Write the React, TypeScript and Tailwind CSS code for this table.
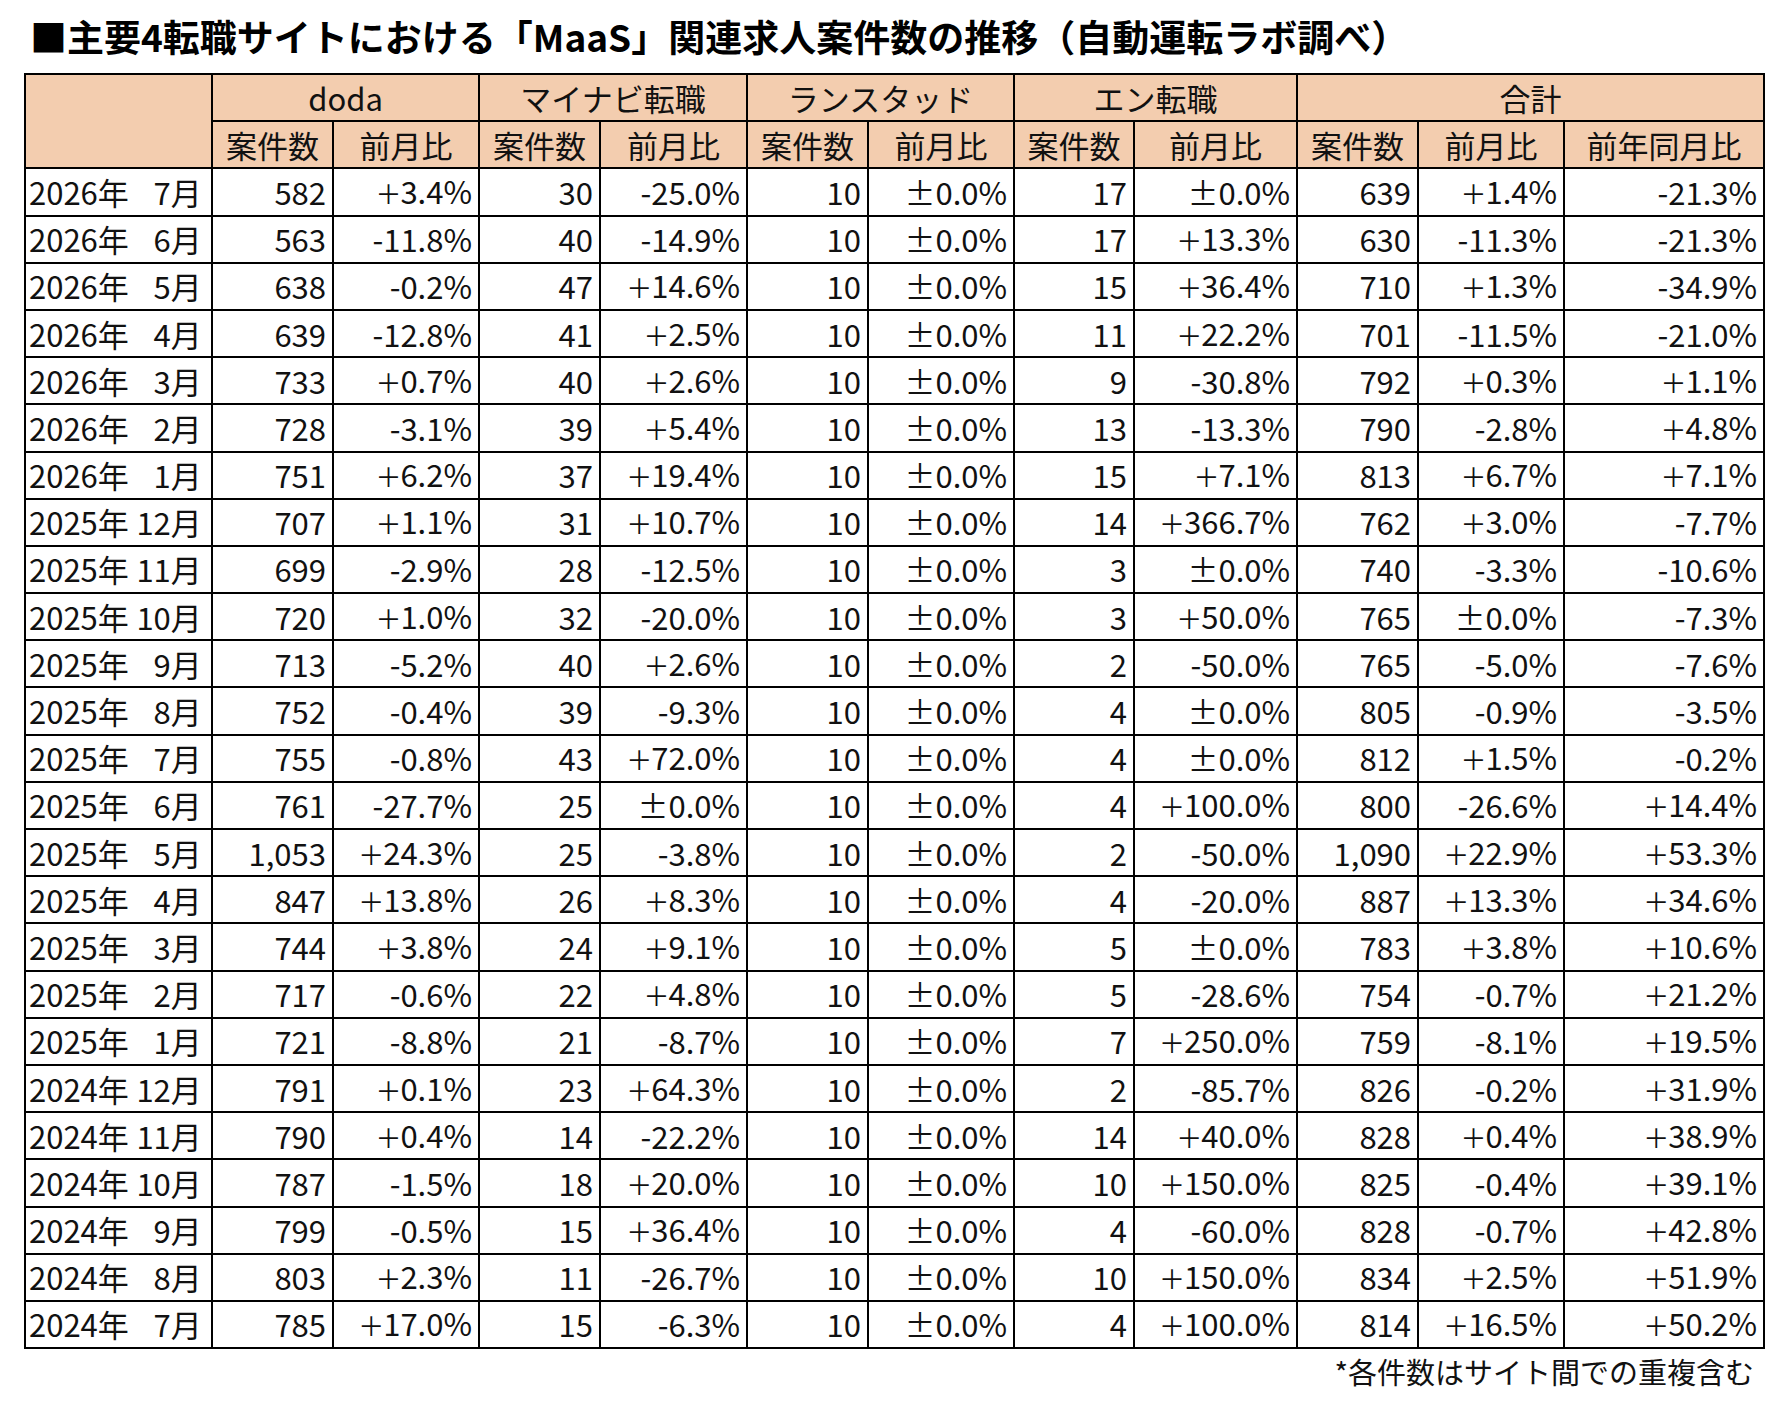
const COL_WIDTHS = [187, 121, 146, 121, 147, 121, 146, 120, 163, 121, 146, 200]

const SITES = ["doda", "マイナビ転職", "ランスタッド", "エン転職"]

type Row = [string, string, ...string[]]

const ROWS: Row[] = [
  ["2026", "7", "582", "+3.4%", "30", "-25.0%", "10", "±0.0%", "17", "±0.0%", "639", "+1.4%", "-21.3%"],
  ["2026", "6", "563", "-11.8%", "40", "-14.9%", "10", "±0.0%", "17", "+13.3%", "630", "-11.3%", "-21.3%"],
  ["2026", "5", "638", "-0.2%", "47", "+14.6%", "10", "±0.0%", "15", "+36.4%", "710", "+1.3%", "-34.9%"],
  ["2026", "4", "639", "-12.8%", "41", "+2.5%", "10", "±0.0%", "11", "+22.2%", "701", "-11.5%", "-21.0%"],
  ["2026", "3", "733", "+0.7%", "40", "+2.6%", "10", "±0.0%", "9", "-30.8%", "792", "+0.3%", "+1.1%"],
  ["2026", "2", "728", "-3.1%", "39", "+5.4%", "10", "±0.0%", "13", "-13.3%", "790", "-2.8%", "+4.8%"],
  ["2026", "1", "751", "+6.2%", "37", "+19.4%", "10", "±0.0%", "15", "+7.1%", "813", "+6.7%", "+7.1%"],
  ["2025", "12", "707", "+1.1%", "31", "+10.7%", "10", "±0.0%", "14", "+366.7%", "762", "+3.0%", "-7.7%"],
  ["2025", "11", "699", "-2.9%", "28", "-12.5%", "10", "±0.0%", "3", "±0.0%", "740", "-3.3%", "-10.6%"],
  ["2025", "10", "720", "+1.0%", "32", "-20.0%", "10", "±0.0%", "3", "+50.0%", "765", "±0.0%", "-7.3%"],
  ["2025", "9", "713", "-5.2%", "40", "+2.6%", "10", "±0.0%", "2", "-50.0%", "765", "-5.0%", "-7.6%"],
  ["2025", "8", "752", "-0.4%", "39", "-9.3%", "10", "±0.0%", "4", "±0.0%", "805", "-0.9%", "-3.5%"],
  ["2025", "7", "755", "-0.8%", "43", "+72.0%", "10", "±0.0%", "4", "±0.0%", "812", "+1.5%", "-0.2%"],
  ["2025", "6", "761", "-27.7%", "25", "±0.0%", "10", "±0.0%", "4", "+100.0%", "800", "-26.6%", "+14.4%"],
  ["2025", "5", "1,053", "+24.3%", "25", "-3.8%", "10", "±0.0%", "2", "-50.0%", "1,090", "+22.9%", "+53.3%"],
  ["2025", "4", "847", "+13.8%", "26", "+8.3%", "10", "±0.0%", "4", "-20.0%", "887", "+13.3%", "+34.6%"],
  ["2025", "3", "744", "+3.8%", "24", "+9.1%", "10", "±0.0%", "5", "±0.0%", "783", "+3.8%", "+10.6%"],
  ["2025", "2", "717", "-0.6%", "22", "+4.8%", "10", "±0.0%", "5", "-28.6%", "754", "-0.7%", "+21.2%"],
  ["2025", "1", "721", "-8.8%", "21", "-8.7%", "10", "±0.0%", "7", "+250.0%", "759", "-8.1%", "+19.5%"],
  ["2024", "12", "791", "+0.1%", "23", "+64.3%", "10", "±0.0%", "2", "-85.7%", "826", "-0.2%", "+31.9%"],
  ["2024", "11", "790", "+0.4%", "14", "-22.2%", "10", "±0.0%", "14", "+40.0%", "828", "+0.4%", "+38.9%"],
  ["2024", "10", "787", "-1.5%", "18", "+20.0%", "10", "±0.0%", "10", "+150.0%", "825", "-0.4%", "+39.1%"],
  ["2024", "9", "799", "-0.5%", "15", "+36.4%", "10", "±0.0%", "4", "-60.0%", "828", "-0.7%", "+42.8%"],
  ["2024", "8", "803", "+2.3%", "11", "-26.7%", "10", "±0.0%", "10", "+150.0%", "834", "+2.5%", "+51.9%"],
  ["2024", "7", "785", "+17.0%", "15", "-6.3%", "10", "±0.0%", "4", "+100.0%", "814", "+16.5%", "+50.2%"],
]

const cell = "border-2 border-black h-[47.2px] p-0 leading-[40px] whitespace-nowrap"
const head = `${cell} bg-[#f3cdaf] text-center font-normal`

// the sheet draws ± full width and a large + sign
function Value({ text }: { text: string }) {
  if (text.startsWith("±")) {
    return (
      <>
        <span className="inline-block w-[1em] text-left">±</span>
        {text.slice(1)}
      </>
    )
  }
  if (text.startsWith("+")) {
    return (
      <>
        <span className="inline-block w-[25px] text-center text-[26px]">＋</span>
        {text.slice(1)}
      </>
    )
  }
  return <>{text}</>
}

export default function App() {
  return (
    <div
      className="min-h-[1408px] w-[1786px] bg-white pl-[24px] text-[#111]"
      style={{ fontFamily: '"Noto Sans CJK JP", "Noto Sans", sans-serif' }}
    >
      <h1 className="ml-[6px] mt-[10px] text-[37px] font-bold leading-[52px] text-black whitespace-nowrap">
        ■主要4転職サイトにおける「MaaS」関連求人案件数の推移（自動運転ラボ調べ）
      </h1>

      <table className="mt-[11px] w-[1739px] table-fixed border-collapse text-[31px]">
        <colgroup>
          {COL_WIDTHS.map((w, i) => (
            <col key={i} style={{ width: w }} />
          ))}
        </colgroup>
        <thead>
          <tr>
            <th rowSpan={2} className={head} />
            {SITES.map((site) => (
              <th key={site} colSpan={2} className={head}>
                {site}
              </th>
            ))}
            <th colSpan={3} className={head}>
              合計
            </th>
          </tr>
          <tr>
            {SITES.flatMap((site) => [
              <th key={`${site}-n`} className={head}>
                案件数
              </th>,
              <th key={`${site}-r`} className={head}>
                前月比
              </th>,
            ])}
            <th className={head}>案件数</th>
            <th className={head}>前月比</th>
            <th className={head}>前年同月比</th>
          </tr>
        </thead>
        <tbody>
          {ROWS.map(([year, month, ...values]) => (
            <tr key={`${year}-${month}`}>
              <td className={`${cell} pl-[3px] text-left`}>
                {year}年
                <span className="ml-[7px] inline-block w-[35px] text-right">{month}</span>月
              </td>
              {values.map((v, i) => (
                <td key={i} className={`${cell} pr-[6px] text-right`}>
                  <Value text={v} />
                </td>
              ))}
            </tr>
          ))}
        </tbody>
      </table>

      <p className="mt-[1px] w-[1739px] pr-[9px] text-right text-[29px] leading-[42px]">
        *各件数はサイト間での重複含む
      </p>
    </div>
  )
}
